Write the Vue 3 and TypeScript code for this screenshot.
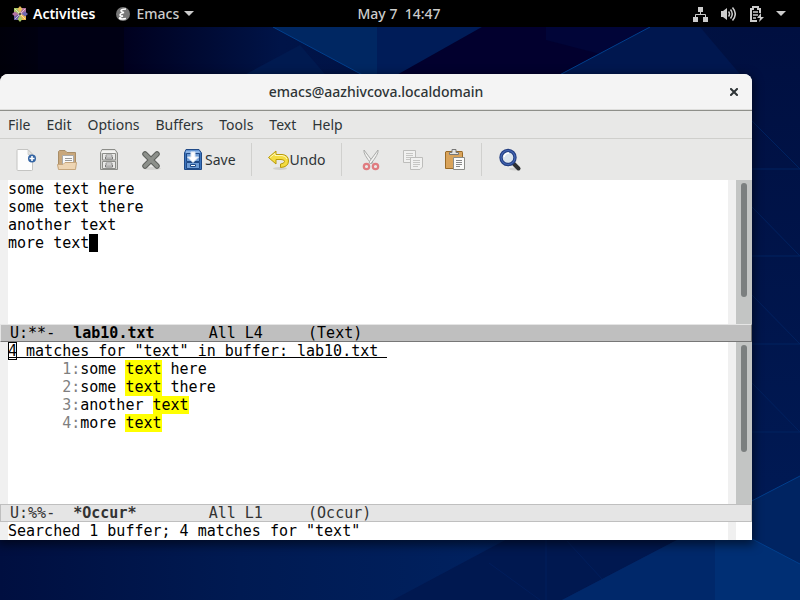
<script setup lang="ts">
import { ref } from 'vue'

interface Match {
  line: number
  before: string
  hit: string
  after: string
}

interface Mode {
  flags: string
  name: string
  info: string
}

const menus: string[] = ['File', 'Edit', 'Options', 'Buffers', 'Tools', 'Text', 'Help']

const bufferLines = ref<string[]>(['some text here', 'some text there', 'another text', 'more text'])

const matches = ref<Match[]>([
  { line: 1, before: 'some ', hit: 'text', after: ' here' },
  { line: 2, before: 'some ', hit: 'text', after: ' there' },
  { line: 3, before: 'another ', hit: 'text', after: '' },
  { line: 4, before: 'more ', hit: 'text', after: '' },
])

const textMode: Mode = { flags: ' U:**-  ', name: 'lab10.txt', info: '      All L4     (Text)' }
const occurMode: Mode = { flags: ' U:%%-  ', name: '*Occur*', info: '        All L1     (Occur)' }

// Line numbers are right-aligned in a seven-column gutter.
const gutter = (line: number): string => `${String(line).padStart(7)}:`
</script>

<template>
  <div class="screen">
    <svg class="wallpaper" viewBox="0 0 800 600" preserveAspectRatio="none" aria-hidden="true">
      <defs>
        <linearGradient id="wp-base" x1="0" y1="0" x2="1" y2="0">
          <stop offset="0" stop-color="#00000a" />
          <stop offset="0.15" stop-color="#00001e" />
          <stop offset="0.35" stop-color="#001448" />
          <stop offset="1" stop-color="#001040" />
        </linearGradient>
        <linearGradient id="wp-low" x1="0" y1="0" x2="1" y2="0">
          <stop offset="0" stop-color="#000f40" />
          <stop offset="0.3" stop-color="#001a52" />
          <stop offset="0.6" stop-color="#00215f" />
          <stop offset="1" stop-color="#001c55" />
        </linearGradient>
        <linearGradient id="wp-side" x1="0" y1="0" x2="0" y2="1">
          <stop offset="0" stop-color="#000f40" />
          <stop offset="1" stop-color="#001a55" />
        </linearGradient>
      </defs>
      <rect width="800" height="600" fill="url(#wp-base)" />
      <rect x="38" y="27" width="86" height="60" fill="#000014" />
      <path d="M235 80 300 45 330 80Z" fill="#001a50" />
      <path d="M273 27H377V80H372Z" fill="#002762" />
      <path d="M377 27H482L388 80H377Z" fill="#001c58" />
      <path d="M482 27H650L550 80H388Z" fill="#02002e" />
      <path d="M546 27H650L600 54 546 40Z" fill="#010538" />
      <path d="M650 27H700L745 80H550Z" fill="#00174f" />
      <path d="M273 27 372 80M650 27 550 80" stroke="#003f8c" fill="none" />
      <rect x="740" y="27" width="60" height="500" fill="url(#wp-side)" />
      <rect y="530" width="800" height="70" fill="url(#wp-low)" />
      <path d="M393 600 524 530H696L562 600Z" fill="#001850" />
      <path d="M562 600 696 530H715V600Z" fill="#00286a" />
      <path d="M489 563 540 600M567 541 602 579M546 540V600" stroke="#001e5c" fill="none" />
      <path d="M740 507 800 476V600H740Z" fill="#002462" />
      <path d="M715 530H735L800 564V600H715Z" fill="#002f74" />
      <path d="M740 507 800 476M735 530 800 564" stroke="#003f8c" fill="none" />
      <path d="M752 169H800M752 256H800M752 344H800M752 432H800M752 121 800 169M752 207 800 256M752 295 800 344M752 383 800 432" stroke="#002260" fill="none" />
    </svg>

    <header class="topbar">
      <div class="topbar-side">
        <button class="panel-button activities" type="button">
          <svg width="16" height="16" viewBox="0 0 16 16" aria-hidden="true">
            <path d="M2 2H14V14H2Z" fill="#d7c9b8" />
            <path d="M2 2H7.500V7.500H2Z" fill="#a9c766" />
            <path d="M8.500 2H14V7.500H8.500Z" fill="#b0719f" />
            <path d="M2 8.500H7.500V14H2Z" fill="#6a5fa8" />
            <path d="M8.500 8.500H14V14H8.500Z" fill="#efb74a" />
            <path d="M8 0 10.500 3 8 6.500 5.500 3Z" fill="#e8bd5c" />
            <path d="M16 8 13 10.500 9.500 8 13 5.500Z" fill="#6f69b0" />
            <path d="M8 16 5.500 13 8 9.500 10.500 13Z" fill="#a9c766" />
            <path d="M0 8 3 5.500 6.500 8 3 10.500Z" fill="#b0719f" />
            <path d="M3 3 13 13M13 3 3 13" stroke="#f2e9df" stroke-width="0.700" />
            <circle cx="8" cy="8" r="1" fill="#222" />
          </svg>
          <span>Activities</span>
        </button>
        <button class="panel-button app" type="button">
          <svg width="16" height="16" viewBox="0 0 16 16" aria-hidden="true">
            <circle cx="8" cy="8" r="7" fill="#777" />
            <path d="M11 3Q7 3 6 4.500 6 6 9 6.500 5 7.500 5 9 5 10 8 10 4.500 11 4.500 12.500 7 13.500 11 12.500" stroke="#fff" stroke-width="1.500" fill="none" />
          </svg>
          <span>Emacs</span>
          <svg width="10" height="5" viewBox="0 0 10 5" aria-hidden="true"><path d="M0 0H10L5 5Z" fill="#ccc" /></svg>
        </button>
      </div>
      <button class="panel-button clock" type="button">May 7&nbsp; 14:47</button>
      <div class="topbar-side end">
        <button class="panel-button status" type="button" aria-label="System menu">
          <svg width="16" height="16" viewBox="0 0 16 16" aria-hidden="true">
            <path d="M6 1H11V6H6ZM1 11H6V16H1ZM11 11H16V16H11Z" fill="#ccc" />
            <path d="M8.500 6V8.500M3.500 11V8.500H13.500V11" fill="none" stroke="#ccc" />
          </svg>
          <svg width="16" height="16" viewBox="0 0 16 16" aria-hidden="true">
            <path d="M1 5H3L7 2V14L3 11H1Z" fill="#ccc" />
            <path d="M8.500 5.500Q10.500 8 8.500 10.500M10.500 3.500Q14 8 10.500 12.500M12.500 1.500Q18 8 12.500 14.500" fill="none" stroke="#ccc" stroke-width="1.500" />
          </svg>
          <svg width="16" height="16" viewBox="0 0 16 16" aria-hidden="true">
            <path d="M9 15H3V3H5V1H10V3H12V7" fill="none" stroke="#ccc" stroke-width="2" />
            <path d="M5 6H10M5 9H10M5 12H8" stroke="#ccc" stroke-width="1.500" />
            <path d="M13 7 9 12H12L11 16 16 11H13Z" fill="#ccc" />
          </svg>
          <svg width="10" height="5" viewBox="0 0 10 5" aria-hidden="true"><path d="M0 0H10L5 5Z" fill="#ccc" /></svg>
        </button>
      </div>
    </header>

    <main class="window">
      <div class="titlebar">
        <h1>emacs@aazhivcova.localdomain</h1>
        <button class="close" type="button" aria-label="Close">
          <svg width="8" height="8" viewBox="0 0 8 8" aria-hidden="true"><path d="M1 1 7 7M7 1 1 7" stroke="#2e3436" stroke-width="2" stroke-linecap="square" /></svg>
        </button>
      </div>

      <nav class="menubar">
        <button v-for="menu in menus" :key="menu" type="button">{{ menu }}</button>
      </nav>

      <div class="toolbar">
        <div class="group files">
          <button type="button" aria-label="New file">
            <svg width="24" height="24" viewBox="0 0 24 24" aria-hidden="true">
              <path d="M4 2.500Q4 1.500 5 1.500H15L19.500 6V22Q19.500 22.500 18.500 22.500H5Q4 22.500 4 21.500Z" fill="#fdfdfd" stroke="#c4c4c2" />
              <path d="M15 2V6.500H19.500Z" fill="#e2e2e0" stroke="#c4c4c2" stroke-width="0.700" />
              <circle cx="19" cy="10.500" r="4" fill="#3465a4" />
              <path d="M19 8V13M16.500 10.500H21.500" stroke="#fff" stroke-width="1.600" />
            </svg>
          </button>
          <button type="button" aria-label="Open file">
            <svg width="24" height="24" viewBox="0 0 24 24" aria-hidden="true">
              <path d="M3.500 3.500 4.500 2.500H10L12 4.500H20.500V20H3.500Z" fill="#c8a77c" stroke="#a98d67" />
              <path d="M7.500 7.500H18.500V18H7.500Z" fill="#fafafa" stroke="#aaa" />
              <path d="M10 10.500H17M10 12.500H17M10 14.500H15" stroke="#999" />
              <path d="M2.500 16.500H8L10 14.500H21.500L20.500 21.500H3.500Z" fill="#eed5b3" stroke="#c6a67d" />
            </svg>
          </button>
          <button type="button" aria-label="Open directory">
            <svg width="24" height="24" viewBox="0 0 24 24" aria-hidden="true">
              <path d="M5 1.500H18L20.500 5V21.500H3.500V5Z" fill="#d4d4d1" stroke="#8c8d89" />
              <path d="M5 2.500H18L19 5H4Z" fill="#f3f3f1" />
              <path d="M5.500 5.500H18.500V12H5.500ZM5.500 13.500H18.500V20.500H5.500Z" fill="#e9e9e7" stroke="#8c8d89" />
              <path d="M9 7H15V9H9ZM9 15H15V17H9Z" fill="#fff" stroke="#777" stroke-width="0.800" />
              <path d="M8.500 9V11H15.500V9M8.500 17V19H15.500V17" fill="none" stroke="#777" />
            </svg>
          </button>
          <button type="button" aria-label="Close buffer">
            <svg width="24" height="24" viewBox="0 0 24 24" aria-hidden="true">
              <ellipse cx="13" cy="20.500" rx="9" ry="1.500" fill="#d3d3d1" />
              <path d="M6 6 18 18M18 6 6 18" stroke="#5d605c" stroke-width="5.500" stroke-linecap="round" />
              <path d="M6 6 18 18M18 6 6 18" stroke="#8d908b" stroke-width="3.500" stroke-linecap="round" />
            </svg>
          </button>
          <button type="button">
            <svg width="24" height="24" viewBox="0 0 24 24" aria-hidden="true">
              <path d="M5 1.500H18L20.500 5V21.500H3.500V5Z" fill="#3b74bd" stroke="#204a87" />
              <path d="M5 2.500H18L19.500 5H4.500Z" fill="#8db4e4" />
              <path d="M5.500 5.500H18.500V13.500H5.500ZM5.500 14.500H18.500V20.500H5.500Z" fill="#6f9dd6" stroke="#204a87" />
              <path d="M10 4H14V9H17.500L12 14.500 6.500 9H10Z" fill="#fff" stroke="#dfe8f2" />
              <path d="M9.500 16.500H14.500V18.500H9.500Z" fill="#fff" stroke="#204a87" />
            </svg>
            <span>Save</span>
          </button>
        </div>
        <div class="group undo">
          <button type="button">
            <svg width="24" height="24" viewBox="0 0 24 24" aria-hidden="true">
              <ellipse cx="14" cy="20.500" rx="7" ry="1.500" fill="#d0d0ce" />
              <path d="M2.500 9.500 10 3V6.500H16Q22.500 7 22.500 13 22.500 19 14.500 19.500V16Q18.500 15.500 18.500 13.500 18.500 11.500 15 11.500H10V16Z" fill="#f4dc42" stroke="#b89a0a" stroke-linejoin="round" />
              <path d="M4 9.500 9 5.500V7.500H16Q20 8 21 11" fill="none" stroke="#fff8b8" />
            </svg>
            <span>Undo</span>
          </button>
        </div>
        <div class="group edit">
          <button type="button" aria-label="Cut" disabled>
            <svg width="24" height="24" viewBox="0 0 24 24" aria-hidden="true">
              <path d="M5 2Q4 6 12.500 16L14 14Z" fill="#f3f3f2" stroke="#a9aaa8" />
              <path d="M19 2Q20 6 11.500 16L10 14Z" fill="#f3f3f2" stroke="#a9aaa8" />
              <circle cx="7.500" cy="18.500" r="2.700" fill="none" stroke="#e07c80" stroke-width="2.200" />
              <circle cx="16.500" cy="18.500" r="2.700" fill="none" stroke="#e07c80" stroke-width="2.200" />
            </svg>
          </button>
          <button type="button" aria-label="Copy" disabled>
            <svg width="24" height="24" viewBox="0 0 24 24" aria-hidden="true">
              <path d="M2.500 2.500H14.500V14.500H2.500Z" fill="#f1f1f0" stroke="#bdbdbb" />
              <path d="M5 5.500H12M5 7.500H12M5 9.500H12M5 11.500H10" stroke="#c6c6c4" />
              <path d="M9.500 9.500H21.500V19L19 21.500H9.500Z" fill="#f1f1f0" stroke="#bdbdbb" />
              <path d="M12 12.500H19M12 14.500H19M12 16.500H19M12 18.500H17" stroke="#c6c6c4" />
            </svg>
          </button>
          <button type="button" aria-label="Paste">
            <svg width="24" height="24" viewBox="0 0 24 24" aria-hidden="true">
              <path d="M3 3.500H19Q19.500 3.500 19.500 4.500V20.500H2.500V4Z" fill="#d9a35a" stroke="#9a6a26" />
              <path d="M6.500 6.500V4.500H9V1.500H13V4.500H15.500V6.500Z" fill="#e4e4e2" stroke="#777" />
              <path d="M10.500 9.500H21.500V21.500H10.500Z" fill="#fbfbfa" stroke="#8b8c88" />
              <path d="M13 12.500H19M13 14.500H19M13 16.500H19M13 18.500H17" stroke="#888" />
            </svg>
          </button>
        </div>
        <div class="group search">
          <button type="button" aria-label="Search">
            <svg width="24" height="24" viewBox="0 0 24 24" aria-hidden="true">
              <ellipse cx="17" cy="21" rx="6" ry="1.500" fill="#d0d0ce" />
              <path d="M15.500 15.500 20.500 20.500" stroke="#2e3032" stroke-width="4" stroke-linecap="round" />
              <circle cx="10" cy="9.500" r="7" fill="#dbe4ec" stroke="#243f82" stroke-width="3.400" />
              <circle cx="10" cy="9.500" r="7" fill="none" stroke="#4467b5" stroke-width="1.200" />
              <path d="M6 9Q7 5 11 5" stroke="#fff" stroke-width="1.500" fill="none" />
            </svg>
          </button>
        </div>
      </div>

      <section class="pane upper" aria-label="lab10.txt">
        <div class="text">
          <div v-for="(line, i) in bufferLines" :key="i" class="line">{{ line }}<span v-if="i === bufferLines.length - 1" class="cursor"></span></div>
        </div>
        <div class="scroll"><div class="thumb"></div></div>
      </section>
      <div class="modeline active">{{ textMode.flags }}<b>{{ textMode.name }}</b>{{ textMode.info }}</div>

      <section class="pane lower" aria-label="Occur">
        <div class="text">
          <div class="line"><span class="heading"><span class="hollow">4</span> matches for "text" in buffer: lab10.txt </span></div>
          <div v-for="m in matches" :key="m.line" class="line"><span class="num">{{ gutter(m.line) }}</span>{{ m.before }}<mark>{{ m.hit }}</mark>{{ m.after }}</div>
        </div>
        <div class="scroll"><div class="thumb"></div></div>
      </section>
      <div class="modeline">{{ occurMode.flags }}<b>{{ occurMode.name }}</b>{{ occurMode.info }}</div>

      <div class="echo"><div class="text line">Searched 1 buffer; 4 matches for "text"</div></div>
    </main>
  </div>
</template>

<style>
body {
  margin: 0;
  background: #001040;
}
</style>

<style scoped>
.screen {
  position: relative;
  display: flex;
  flex-direction: column;
  min-height: 100vh;
  font-family: "Noto Sans", "Open Sans", sans-serif;
  font-size: 14px;
  color: #2e3436;
}
.wallpaper {
  position: absolute;
  inset: 0;
  width: 100%;
  height: 100%;
}
button {
  display: flex;
  align-items: center;
  margin: 0;
  padding: 0;
  border: 0;
  background: none;
  color: inherit;
  font: inherit;
}
svg {
  flex: none;
}
.topbar {
  position: relative;
  display: flex;
  height: 27px;
  background: #000;
  color: #ccc;
  font-weight: 500;
}
.topbar-side {
  display: flex;
  flex: 1;
  padding: 0 12px;
  gap: 20px;
}
.topbar-side.end {
  justify-content: flex-end;
  padding-right: 14px;
}
.panel-button {
  gap: 5px;
  white-space: pre;
}
.activities {
  color: #fff;
  font-weight: 600;
}
.status {
  gap: 12px;
}
.window {
  position: relative;
  display: flex;
  flex: 1;
  flex-direction: column;
  margin: 47px 48px 60px 0;
  border-radius: 8px 8px 0 0;
  background: #fff;
  box-shadow: 0 3px 10px 2px rgba(0, 0, 0, 0.5);
  overflow: hidden;
}
.titlebar {
  display: grid;
  grid-template-columns: 1fr auto 1fr;
  align-items: center;
  height: 36px;
  padding: 0 14px;
  border-bottom: 1px solid #8e8f8a;
  background: #f4f4f4;
  box-shadow: inset 0 -1px #dededc;
}
.titlebar h1 {
  grid-column: 2;
  margin: 0;
  font-size: 14px;
  font-weight: 500;
  line-height: 18px;
}
.close {
  justify-self: end;
}
.menubar {
  display: flex;
  gap: 16px;
  height: 27px;
  padding: 0 8px;
  border-bottom: 1px solid #cfcfcc;
  background: #e8e8e7;
}
.toolbar {
  display: flex;
  height: 41px;
  background: #e8e8e7;
}
.group {
  display: flex;
  gap: 18px;
  margin: 4px 0;
}
.group + .group {
  border-left: 1px solid #d0d0ce;
}
.files {
  padding: 0 15px 0 13px;
}
.undo {
  padding: 0 15px 0 14px;
}
.edit {
  padding: 0 14px 0 17px;
}
.search {
  padding: 0 16px;
}
.pane,
.echo,
.modeline {
  font-family: "DejaVu Sans Mono", monospace;
  font-size: 15px;
  line-height: 18px;
  color: #000;
}
.pane {
  display: flex;
  min-height: 90px;
}
.upper {
  flex: 144 0 0;
}
.lower {
  flex: 162 0 0;
}
.text {
  flex: 1;
  border: solid #f0f0f0;
  border-width: 0 8px;
}
.line {
  height: 18px;
  white-space: pre;
}
.cursor {
  display: inline-block;
  width: 9px;
  height: 18px;
  background: #000;
  vertical-align: top;
}
.scroll {
  display: flex;
  width: 16px;
  background: #c3c5c4;
}
.thumb {
  width: 6px;
  height: 79%;
  margin: 3px 5px;
  border-radius: 3px;
  background: #7b7f7f;
}
.lower .thumb {
  height: 66%;
}
.modeline {
  height: 16px;
  border: 1px solid #bfbfbf;
  background: #e5e5e5;
  color: #333;
  line-height: 16px;
  white-space: pre;
}
.modeline.active {
  border-color: #e5e5e5 #777 #777 #e5e5e5;
  background: #bfbfbf;
  color: #000;
}
.heading {
  display: inline-block;
  height: 15px;
  border-bottom: 1px solid #000;
}
.hollow {
  display: inline-block;
  height: 18px;
  box-shadow: inset 0 0 0 1px #000;
}
.num {
  color: #7f7f7f;
}
mark {
  display: inline-block;
  height: 18px;
  background: #ff0;
  color: #000;
}
.echo {
  display: flex;
  padding-right: 16px;
}
</style>
